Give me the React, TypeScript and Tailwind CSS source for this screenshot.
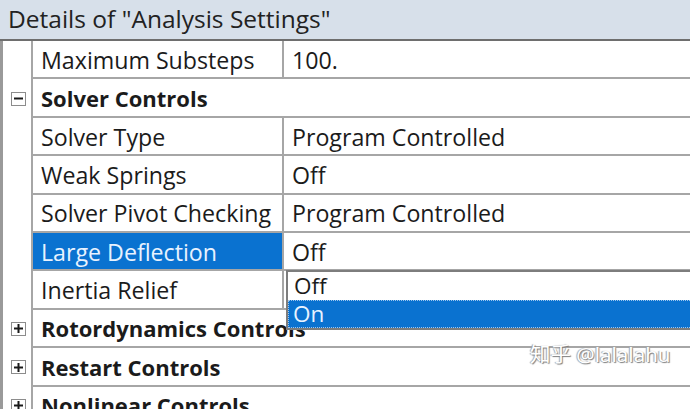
import React from 'react';

type Row =
  | { kind: 'prop'; name: string; value: string; selected?: boolean }
  | { kind: 'group'; name: string; open: boolean };

const rows: Row[] = [
  { kind: 'prop', name: 'Maximum Substeps', value: '100.' },
  { kind: 'group', name: 'Solver Controls', open: true },
  { kind: 'prop', name: 'Solver Type', value: 'Program Controlled' },
  { kind: 'prop', name: 'Weak Springs', value: 'Off' },
  { kind: 'prop', name: 'Solver Pivot Checking', value: 'Program Controlled' },
  { kind: 'prop', name: 'Large Deflection', value: 'Off', selected: true },
  { kind: 'prop', name: 'Inertia Relief', value: '' },
  { kind: 'group', name: 'Rotordynamics Controls', open: false },
  { kind: 'group', name: 'Restart Controls', open: false },
  { kind: 'group', name: 'Nonlinear Controls', open: false },
];

const ExpandBox = ({ open }: { open: boolean }) => (
  <div className="w-[15px] h-[14px] border border-[#8c8c8c] bg-white flex items-center justify-center">
    <svg width="9" height="9" viewBox="0 0 9 9">
      <rect x="0" y="3.5" width="9" height="2" fill="#1a1a1a" />
      {!open && <rect x="3.5" y="0" width="2" height="9" fill="#1a1a1a" />}
    </svg>
  </div>
);

export default function App() {
  return (
    <div
      className="relative w-[690px] h-[409px] overflow-hidden bg-white text-[#1b1b1b]"
      style={{ fontFamily: '"Open Sans", "Noto Sans", sans-serif' }}
    >
      <div className="h-[39px] bg-[#d7e0ea] pl-2 flex items-center text-[24.5px] leading-none text-[#222] whitespace-nowrap">
        Details of "Analysis Settings"
      </div>
      <div className="h-[2px] bg-[#6e6e6e]" />
      <div className="flex">
        <div className="w-[3px] bg-[#9a9a9a] self-stretch" />
        <div className="flex-1">
          {rows.map((r, i) => (
            <div key={i} className="flex h-[38.4px]">
              <div className="w-[30px] flex items-center justify-center border-r-2 border-[#a6a6a6] bg-white pl-[2px]">
                {r.kind === 'group' && <ExpandBox open={r.open} />}
              </div>
              {r.kind === 'group' ? (
                <div className="flex-1 flex items-center pl-2 pt-[2px] border-b-2 border-[#a6a6a6] font-bold text-[22px] whitespace-nowrap">
                  {r.name}
                </div>
              ) : (
                <div className="flex-1 flex border-b-2 border-[#a6a6a6] text-[23.2px] whitespace-nowrap">
                  <div
                    className={
                      'w-[251px] flex items-center pl-2 pt-[2px] border-r-2 border-[#a6a6a6] ' +
                      (r.selected ? 'bg-[#0a72d0] text-[#e8f2ff]' : '')
                    }
                  >
                    {r.name}
                  </div>
                  <div className="flex-1 flex items-center pl-2 pt-[2px]">{r.value}</div>
                </div>
              )}
            </div>
          ))}
        </div>
      </div>

      <div className="absolute left-[286px] top-[270px] w-[420px] border-2 border-[#7d7d7d] bg-white text-[22.5px] leading-none">
        <div className="h-[28px] flex items-center pl-[6px]">Off</div>
        <div className="h-[28px] flex items-center pl-[4px] bg-[#0a72d0] text-[#e8f2ff] border border-dotted border-[#9ec6ee]">
          On
        </div>
      </div>

      <div
        className="absolute left-[530px] top-[339px] text-[20.5px] text-white"
        style={{
          fontFamily: '"Noto Sans", "Noto Sans CJK SC", sans-serif',
          textShadow: '1px 1px 1px #7a7a7a, -1px 0 1px #a0a0a0',
        }}
      >
        知乎 @lalalahu
      </div>
    </div>
  );
}
